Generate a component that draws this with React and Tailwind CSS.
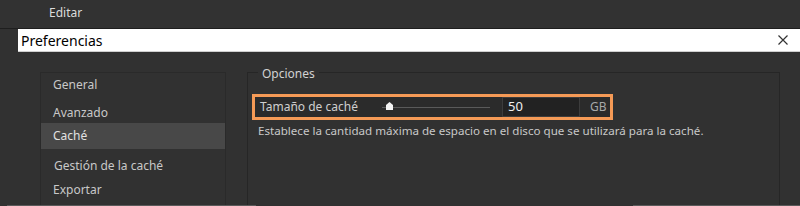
import React from 'react';

const items = [
  { label: 'General', cls: 'h-[28px] pt-[4px] pl-[12px] text-[#c8c8c8]' },
  { label: 'Avanzado', cls: 'h-[22px] pt-[4px] pl-[12px] text-[#c8c8c8]' },
  { label: 'Caché', cls: 'h-[26px] pt-[5px] pl-[12px] bg-[#484848] text-[#e2e2e2]' },
  { label: 'Gestión de la caché', cls: 'h-[28px] pt-[9px] pl-[13px] text-[#c8c8c8]' },
  { label: 'Exportar', cls: 'h-[24px] pt-[5px] pl-[12px] text-[#c8c8c8]' },
];

function Sidebar() {
  return (
    <div className="ml-[40px] w-[186px] mt-[20px] border border-[#2a2a2a] border-b-0 bg-[#313131]">
      {items.map((it) => (
        <div key={it.label} className={'leading-[16px] ' + it.cls}>
          {it.label}
        </div>
      ))}
    </div>
  );
}

function Slider() {
  return (
    <div className="relative w-[108px] h-[14px] ml-[22px]">
      <div className="absolute left-0 right-0 top-[7px] h-px bg-[#5a5a5a]" />
      <svg className="absolute left-[4px] top-[2px]" width="7" height="8" viewBox="0 0 7 8">
        <path d="M3.5 0 L7 3 L7 8 L0 8 L0 3 Z" fill="#f2f2f2" />
      </svg>
    </div>
  );
}

export default function App() {
  return (
    <div
      className="w-[800px] h-[206px] bg-[#313131] overflow-hidden text-[12px]"
      style={{ fontFamily: '"Noto Sans", "Open Sans", sans-serif' }}
    >
      {/* menu bar */}
      <div className="h-[29px] bg-[#323232] border-b border-[#1e1e1e] flex items-center pl-[49px] pb-[2px] text-[#dcdcdc]">
        Editar
      </div>

      {/* dialog title */}
      <div className="ml-[18px] h-[23px] bg-white border-b border-[#cfcfcf] flex items-center justify-between pl-[3px] pr-[12px]">
        <span className="text-[14px] text-black">Preferencias</span>
        <svg width="10" height="10" viewBox="0 0 10 10">
          <path d="M0.5 0.5 L9.5 9.5 M9.5 0.5 L0.5 9.5" stroke="#333" strokeWidth="1.2" />
        </svg>
      </div>

      <div className="flex h-[153px]">
        <Sidebar />

        {/* options group */}
        <div className="ml-[21px] w-[533px] mt-[20px] border border-[#262626] border-b-0 relative">
          <div className="absolute left-[10px] top-[-8px] px-[4px] bg-[#313131] text-[#d2d2d2]">
            Opciones
          </div>
          <div className="mt-[21px] ml-[4px] w-[361px] h-[26px] border-[3px] border-[#f59a56] bg-[#2b2b2b] flex items-center pl-[5px]">
            <span className="text-[#cfcfcf] w-[100px]">Tamaño de caché</span>
            <Slider />
            <div className="ml-[12px] w-[78px] h-[20px] bg-[#222222] border border-[#3c3c3c] flex items-center pl-[5px] text-[13px] text-[#f0f0f0]">
              50
            </div>
            <span className="ml-[10px] text-[#a8a8a8]">GB</span>
          </div>
          <div className="ml-[10px] mt-[2px] text-[11.6px] text-[#c8c8c8]">
            Establece la cantidad máxima de espacio en el disco que se utilizará para la caché.
          </div>
        </div>
      </div>

      {/* bottom edge */}
      <div className="flex h-px">
        <div className="ml-[7px] w-[249px] bg-[#5a5a5a]" />
        <div className="ml-[377px] flex-1 bg-[#5a5a5a]" />
      </div>
    </div>
  );
}
